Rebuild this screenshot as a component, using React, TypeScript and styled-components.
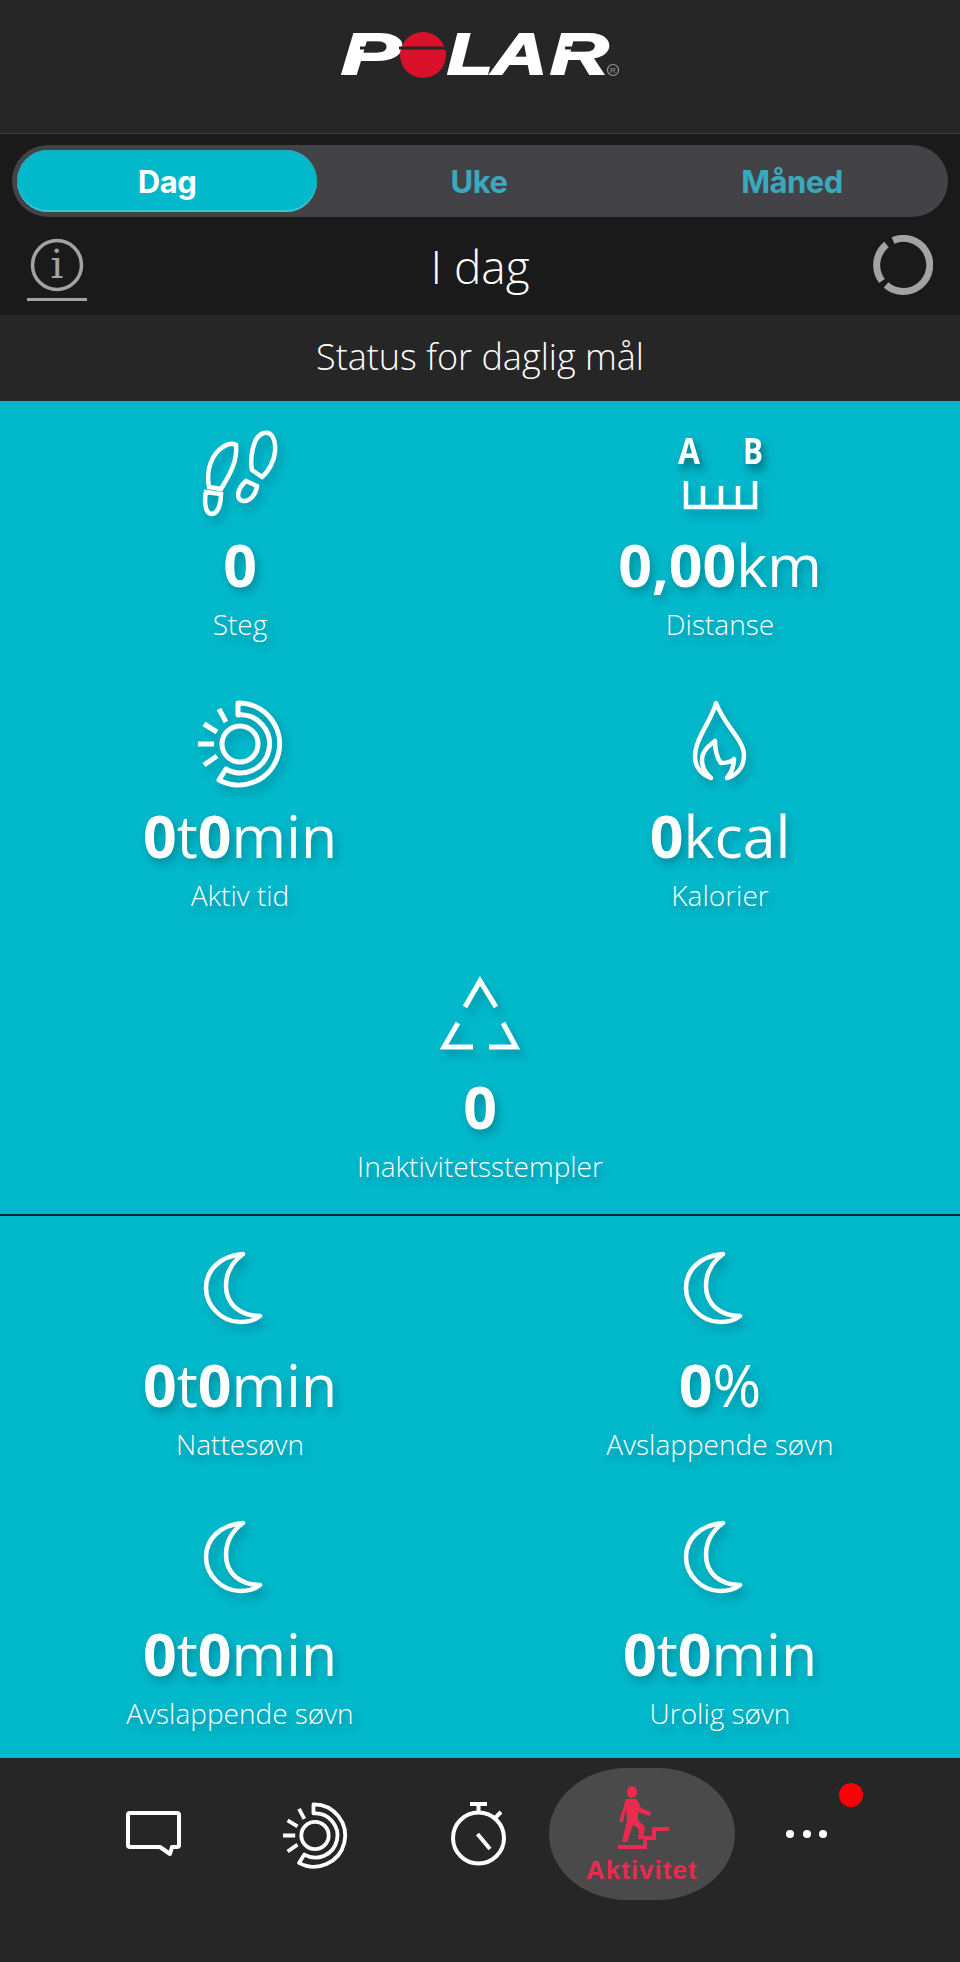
import React from 'react';
import styled, { createGlobalStyle } from 'styled-components';

const GlobalStyle = createGlobalStyle`
  html, body { margin: 0; padding: 0; background: #262626; }
  * { box-sizing: border-box; }
`;

const Page = styled.div`
  width: 960px;
  height: 1962px;
  display: flex;
  flex-direction: column;
  font-family: 'Open Sans', 'Liberation Sans', sans-serif;
  color: #fff;
  overflow: hidden;
`;

const Header = styled.header`
  height: 134px;
  background: #262626;
  border-bottom: 1px solid #3a3a3a;
  display: flex;
  justify-content: center;
  svg { display: block; overflow: visible; margin-top: 25px; }
`;

const Controls = styled.div`
  height: 181px;
  background: #1a1a1a;
  padding-top: 11px;
`;

const Tabs = styled.div`
  width: 936px;
  height: 72px;
  margin: 0 auto;
  padding: 5px;
  border-radius: 36px;
  background: #434347;
  display: grid;
  grid-template-columns: 300px 324px 1fr;
`;

const Tab = styled.div<{ $active?: boolean }>`
  display: flex;
  align-items: center;
  justify-content: center;
  border-radius: 31px;
  font-family: Inter, 'Liberation Sans', Arial, sans-serif;
  font-weight: 700;
  font-size: 31px;
  letter-spacing: -0.5px;
  color: ${p => (p.$active ? '#fff' : '#3aa9be')};
  background: ${p => (p.$active ? '#02b8cb' : 'transparent')};
  box-shadow: ${p => (p.$active ? 'inset 0 -2px 0 #3fc3d0, inset 0 2px 0 #26a9b8' : 'none')};
`;

const TodayRow = styled.div`
  height: 98px;
  padding: 0 27px 2px 27px;
  display: flex;
  align-items: center;
  justify-content: space-between;
`;

const InfoButton = styled.div`
  width: 60px;
  height: 70px;
  padding-top: 6px;
  margin-top: 2px;
  border-bottom: 3px solid #a3a3a3;
  display: flex;
  justify-content: center;
`;

const TodayTitle = styled.div`
  font-size: 46px;
  font-weight: 300;
  line-height: 60px;
  margin-top: 2px;
`;

const StatusBar = styled.div`
  height: 86px;
  padding-bottom: 4px;
  background: #262626;
  display: flex;
  align-items: center;
  justify-content: center;
  font-size: 36px;
  font-weight: 300;
`;

const StatGrid = styled.section<{ $inset?: number; $rowHeight: number; $gap?: number }>`
  background: #02b8cb;
  padding-top: ${p => p.$inset ?? 0}px;
  display: grid;
  grid-template-columns: 1fr 1fr;
  grid-auto-rows: ${p => p.$rowHeight}px;
  row-gap: ${p => p.$gap ?? 0}px;
`;

const Divider = styled.div`
  height: 2px;
  background: #14282c;
`;

const Stat = styled.div<{ $wide?: boolean }>`
  grid-column: ${p => (p.$wide ? '1 / 3' : 'auto')};
  display: flex;
  flex-direction: column;
  align-items: center;
  padding-top: 24px;
  text-shadow: 3px 5px 8px rgba(0, 40, 50, 0.3);
`;

const StatIcon = styled.div`
  height: 100px;
  width: 100%;
  display: flex;
  justify-content: center;
  filter: drop-shadow(4px 6px 4px rgba(0, 40, 50, 0.25));
  svg { display: block; overflow: visible; }
`;

const Value = styled.div`
  font-size: 59px;
  font-weight: 400;
  line-height: 68px;
  margin-top: 5px;
  b { font-weight: 700; }
`;

const Label = styled.div`
  font-size: 28px;
  font-weight: 300;
  line-height: 36px;
  margin-top: 8px;
`;

const Nav = styled.nav`
  flex: 1;
  background: #262626;
  padding: 10px 0 0 72px;
  display: grid;
  grid-template-columns: repeat(5, 162.8px);
  grid-template-rows: 132px;
`;

const NavItem = styled.div<{ $nudge?: number }>`
  position: relative;
  display: flex;
  align-items: center;
  justify-content: center;
  padding-left: ${p => Math.max(p.$nudge ?? 0, 0)}px;
  padding-right: ${p => Math.max(-(p.$nudge ?? 0), 0)}px;
  svg { display: block; overflow: visible; }
`;

const ActiveNavItem = styled.div`
  justify-self: center;
  width: 186px;
  height: 132px;
  border-radius: 78px / 66px;
  background: #4a4a4a;
  display: flex;
  flex-direction: column;
  align-items: center;
  padding-top: 18px;
`;

const ActiveLabel = styled.div`
  font-family: 'Liberation Sans', Arial, sans-serif;
  font-weight: 700;
  font-size: 26px;
  letter-spacing: 1px;
  line-height: 28px;
  color: #ec2a50;
  margin-top: 6px;
`;

const Badge = styled.span`
  position: absolute;
  left: 116px;
  top: 15px;
  width: 24px;
  height: 24px;
  border-radius: 50%;
  background: #fb0007;
`;

const Logo = () => (
  <svg width="300" height="60" viewBox="330 25 300 60">
    <g fill="#fff" stroke="#fff" strokeWidth="1.8" fontFamily="'Liberation Sans', Arial, sans-serif" fontWeight="700" fontStyle="italic" fontSize="58">
      <text transform="translate(341 74) scale(1.55 1)">P</text>
      <text transform="translate(447 74) scale(1.3 1)">L</text>
      <text transform="translate(492 74) scale(1.32 1)">A</text>
      <text transform="translate(550 74) scale(1.4 1)">R</text>
    </g>
    <circle cx="423" cy="55" r="23" fill="#d9112a" />
    <path d="M360 48H384M399 48H447M565 48H592" stroke="#262626" strokeWidth="3" />
    <circle cx="613" cy="70" r="5.5" fill="none" stroke="#999" strokeWidth="1.2" />
    <text x="613" y="73" textAnchor="middle" fontSize="8" fill="#999" fontFamily="'Liberation Sans', sans-serif">R</text>
  </svg>
);

const InfoIcon = () => (
  <svg width="56" height="56" viewBox="0 0 56 56">
    <circle cx="28" cy="28" r="24.5" fill="none" stroke="#a3a3a3" strokeWidth="3.5" />
    <text x="28" y="41" textAnchor="middle" fontSize="40" fill="#a3a3a3" fontFamily="'DejaVu Serif', serif">i</text>
  </svg>
);

const SyncIcon = () => (
  <svg width="60" height="60" viewBox="0 0 60 60">
    <path d="M20 5.5A26.5 26.5 0 1 1 13 50" fill="none" stroke="#a3a3a3" strokeWidth="7" />
    <path d="M9 46A26.5 26.5 0 0 1 13.5 9.5" fill="none" stroke="#a3a3a3" strokeWidth="7" />
  </svg>
);

const Footsteps = () => (
  <svg width="84" height="96" viewBox="198 425 84 96" fill="none" stroke="#fff" strokeWidth="4.5">
    <path d="M264 433C272 431 276 440 275 452C274 462 268 472 262 477L252 470C250 460 252 436 264 433Z" />
    <path d="M236 445C229 441 216 449 211 462C207 472 208 482 209 487L221 489C226 480 238 464 236 445Z" />
    <path d="M246 481L257 486C256 494 250 502 243 501C236 500 236 490 246 481Z" />
    <path d="M206 492L221 494C221 502 219 513 212 514C205 514 204 502 206 492Z" />
  </svg>
);

const Ruler = () => (
  <svg width="84" height="96" viewBox="678 425 84 96">
    <g fill="#fff" fontFamily="'Open Sans', sans-serif" fontWeight="700" fontSize="36">
      <text x="689" y="464" textAnchor="middle" textLength="22" lengthAdjust="spacingAndGlyphs">A</text>
      <text x="753" y="464" textAnchor="middle" textLength="20" lengthAdjust="spacingAndGlyphs">B</text>
    </g>
    <path d="M686 481V507H755V481M703 486V507M721 486V507M738 486V507" fill="none" stroke="#fff" strokeWidth="4.5" />
  </svg>
);

// outline rings with sun rays, used in the stats and in the tab bar
const Rings = ({ size = 92 }: { size?: number }) => (
  <svg width={size} height={size} viewBox="194 696 92 92" fill="none" stroke="#fff" strokeWidth="5">
    <path d="M238 703A41 41 0 1 1 219 780L226 769A29 29 0 1 0 238 715Z" strokeLinejoin="round" />
    <circle cx="240" cy="744" r="18" />
    <path d="M219 709L226 722M204 724L217 732M198 744H214M204 765L217 756" />
  </svg>
);

const Flame = () => (
  <svg width="60" height="86" viewBox="691 696 60 86" fill="none" stroke="#fff" strokeWidth="4.5" strokeLinejoin="round">
    <path d="M717 703C712 722 696 738 696 757C696 767 703 775 712 778C703 770 701 760 705 752C709 745 714 743 716 741C716 750 718 758 722 763C727 763 732 762 735 759C735 767 732 773 728 778C738 775 745 767 745 755C745 740 725 725 717 703Z" />
  </svg>
);

const Stamps = () => (
  <svg width="92" height="84" viewBox="434 967 92 84" fill="none" stroke="#fff" strokeWidth="5">
    <path d="M465 1007L480 981L496 1007M458 1023L444 1047H473M503 1023L516 1047H489" />
  </svg>
);

const Moon = () => (
  <svg width="70" height="84" viewBox="205 1245 70 84" fill="none" stroke="#fff" strokeWidth="4.5" strokeLinejoin="round">
    <path d="M243 1254C220 1256 206 1270 206 1288C206 1306 222 1322 240 1322C248 1322 255 1320 260 1316C240 1316 226 1304 226 1286C226 1272 232 1262 243 1254Z" />
  </svg>
);

const Chat = () => (
  <svg width="56" height="48" viewBox="125 1810 56 48" fill="none" stroke="#fff" strokeWidth="4" strokeLinejoin="round">
    <path d="M130 1813H177Q179 1813 179 1815V1845Q179 1847 177 1847H172L170 1854L160 1847H130Q128 1847 128 1845V1815Q128 1813 130 1813Z" />
  </svg>
);

const Stopwatch = () => (
  <svg width="60" height="66" viewBox="448 1803 60 66" fill="none" stroke="#fff" strokeWidth="4">
    <circle cx="477.5" cy="1840" r="25.5" />
    <path d="M469 1806H486M477.5 1806V1814M494 1820L500 1814M476.5 1836L489 1851" />
  </svg>
);

const Climber = () => (
  <svg width="70" height="64" viewBox="612 1786 70 64" fill="#ec2a50">
    <ellipse cx="637" cy="1792" rx="5" ry="6" />
    <path d="M631 1799H642L646 1808L656 1812L655 1816L643 1812L643 1820L650 1827L648 1839H643L644 1829L638 1825L632 1842H627L632 1820L631 1808L628 1822H624Z" />
    <path d="M623 1847H650V1838H659V1829H674" fill="none" stroke="#ec2a50" strokeWidth="4" />
  </svg>
);

const Dots = () => (
  <svg width="44" height="10" viewBox="0 0 44 10" fill="#fff">
    <circle cx="5" cy="5" r="4" />
    <circle cx="22" cy="5" r="4" />
    <circle cx="38" cy="5" r="4" />
  </svg>
);

const Time = () => (
  <Value><b>0</b>t<b>0</b>min</Value>
);

export default function App() {
  return (
    <>
      <GlobalStyle />
      <Page>
        <Header>
          <Logo />
        </Header>
        <Controls>
          <Tabs>
            <Tab $active>Dag</Tab>
            <Tab>Uke</Tab>
            <Tab>Måned</Tab>
          </Tabs>
          <TodayRow>
            <InfoButton><InfoIcon /></InfoButton>
            <TodayTitle>I dag</TodayTitle>
            <SyncIcon />
          </TodayRow>
        </Controls>
        <StatusBar>Status for daglig mål</StatusBar>
        <StatGrid $rowHeight={271}>
          <Stat>
            <StatIcon><Footsteps /></StatIcon>
            <Value><b>0</b></Value>
            <Label>Steg</Label>
          </Stat>
          <Stat>
            <StatIcon><Ruler /></StatIcon>
            <Value><b>0,00</b>km</Value>
            <Label>Distanse</Label>
          </Stat>
          <Stat>
            <StatIcon><Rings /></StatIcon>
            <Time />
            <Label>Aktiv tid</Label>
          </Stat>
          <Stat>
            <StatIcon><Flame /></StatIcon>
            <Value><b>0</b>kcal</Value>
            <Label>Kalorier</Label>
          </Stat>
          <Stat $wide>
            <StatIcon><Stamps /></StatIcon>
            <Value><b>0</b></Value>
            <Label>Inaktivitetsstempler</Label>
          </Stat>
        </StatGrid>
        <Divider />
        <StatGrid $inset={5} $rowHeight={268} $gap={1}>
          <Stat>
            <StatIcon><Moon /></StatIcon>
            <Time />
            <Label>Nattesøvn</Label>
          </Stat>
          <Stat>
            <StatIcon><Moon /></StatIcon>
            <Value><b>0</b>%</Value>
            <Label>Avslappende søvn</Label>
          </Stat>
          <Stat>
            <StatIcon><Moon /></StatIcon>
            <Time />
            <Label>Avslappende søvn</Label>
          </Stat>
          <Stat>
            <StatIcon><Moon /></StatIcon>
            <Time />
            <Label>Urolig søvn</Label>
          </Stat>
        </StatGrid>
        <Nav>
          <NavItem><Chat /></NavItem>
          <NavItem $nudge={-3}><Rings size={70} /></NavItem>
          <NavItem><Stopwatch /></NavItem>
          <ActiveNavItem>
            <Climber />
            <ActiveLabel>Aktivitet</ActiveLabel>
          </ActiveNavItem>
          <NavItem $nudge={4}><Dots /><Badge /></NavItem>
        </Nav>
      </Page>
    </>
  );
}
